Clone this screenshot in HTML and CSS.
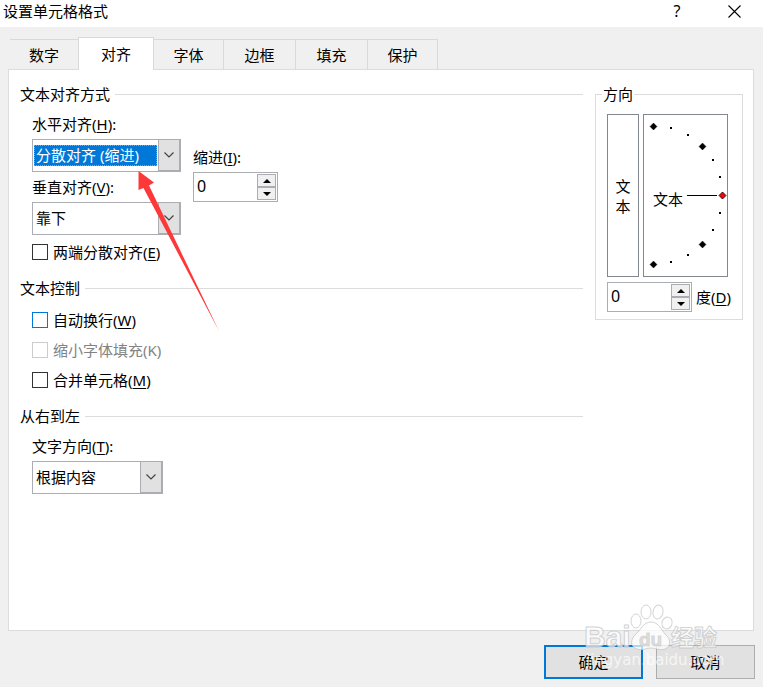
FILE: index.html
```html
<!DOCTYPE html>
<html lang="zh-CN">
<head>
<meta charset="utf-8">
<title>设置单元格格式</title>
<link rel="stylesheet" href="styles.css">
</head>
<body>
<main class="dialog">
  <header class="titlebar">
    <h1 class="title">设置单元格格式</h1>
    <button class="title-btn help" type="button">?</button>
    <button class="title-btn" type="button" aria-label="关闭">
      <svg width="13" height="13" viewBox="0 0 13 13"><path d="M.5.5l12 12M12.500.5l-12 12" fill="none" stroke="#000" stroke-width="1.1"/></svg>
    </button>
  </header>

  <nav class="tabs" role="tablist">
    <button class="tab tab-first" role="tab" type="button">数字</button>
    <button class="tab active" role="tab" type="button" aria-selected="true">对齐</button>
    <button class="tab tab-narrow" role="tab" type="button">字体</button>
    <button class="tab" role="tab" type="button">边框</button>
    <button class="tab" role="tab" type="button">填充</button>
    <button class="tab tab-narrow" role="tab" type="button">保护</button>
  </nav>

  <section class="panel">
    <div class="settings">
      <h2 class="heading">文本对齐方式</h2>
      <div class="align-grid">
        <div class="fields">
          <label class="label" for="horizontal">水平对齐(<u>H</u>):</label>
          <div class="combo">
            <select class="selected" id="horizontal"><option>分散对齐 (缩进)</option></select>
            <span class="drop"><svg width="10" height="6" viewBox="0 0 10 6"><path d="M.5.5L5 5 9.500.5"/></svg></span>
          </div>
          <label class="label label-next" for="vertical">垂直对齐(<u>V</u>):</label>
          <div class="combo">
            <select id="vertical"><option>靠下</option></select>
            <span class="drop"><svg width="10" height="6" viewBox="0 0 10 6"><path d="M.5.5L5 5 9.500.5"/></svg></span>
          </div>
        </div>
        <div class="indent">
          <label class="label" for="indent">缩进(<u>I</u>):</label>
          <div class="spinner">
            <input id="indent" type="text" value="0">
            <div class="steps">
              <button type="button" aria-label="增加缩进"><svg width="8" height="4" viewBox="0 0 8 4"><path d="M0 4L4 0l4 4z"/></svg></button>
              <button type="button" aria-label="减少缩进"><svg width="8" height="4" viewBox="0 0 8 4"><path d="M0 0l4 4 4-4z"/></svg></button>
            </div>
          </div>
        </div>
      </div>
      <label class="check check-justify"><input type="checkbox"><span>两端分散对齐(<u>E</u>)</span></label>

      <h2 class="heading heading-next">文本控制</h2>
      <div class="checks">
        <label class="check"><input class="hot" type="checkbox"><span>自动换行(<u>W</u>)</span></label>
        <label class="check disabled"><input type="checkbox" disabled><span>缩小字体填充(K)</span></label>
        <label class="check"><input type="checkbox"><span>合并单元格(<u>M</u>)</span></label>
      </div>

      <h2 class="heading heading-next">从右到左</h2>
      <div class="fields direction">
        <label class="label" for="direction">文字方向(<u>T</u>):</label>
        <div class="combo">
          <select id="direction"><option>根据内容</option></select>
          <span class="drop"><svg width="10" height="6" viewBox="0 0 10 6"><path d="M.5.5L5 5 9.500.5"/></svg></span>
        </div>
      </div>
    </div>

    <fieldset class="orientation">
      <legend>方向</legend>
      <div class="dials">
        <button class="upright" type="button">文<br>本</button>
        <div class="dial">
          <svg width="83" height="161" viewBox="0 0 83 161">
            <path d="M43 80.500h30" stroke="#000"/>
            <path d="M9.500 8l3.500 3.500-3.500 3.500L6 11.500zM58.500 28l3.500 3.500-3.500 3.500-3.500-3.500zM58.500 126l3.500 3.500-3.500 3.500-3.500-3.500zM9.500 146l3.500 3.500-3.500 3.500-3.500-3.500z" stroke="#000" stroke-width=".4"/>
            <path d="M26 12h2v2h-2zM43 19h2v2h-2zM68 44h2v2h-2zM75 61h2v2h-2zM75 97h2v2h-2zM68 114h2v2h-2zM43 139h2v2h-2zM26 146h2v2h-2z"/>
            <path d="M78.500 77l3.500 3.500-3.500 3.500-3.500-3.500z" fill="#f00" stroke="#000" stroke-width=".8"/>
            <text x="9" y="90">文本</text>
          </svg>
        </div>
      </div>
      <div class="degrees">
        <div class="spinner">
          <input id="degrees" type="text" value="0">
          <div class="steps">
            <button type="button" aria-label="增加度数"><svg width="8" height="4" viewBox="0 0 8 4"><path d="M0 4L4 0l4 4z"/></svg></button>
            <button type="button" aria-label="减少度数"><svg width="8" height="4" viewBox="0 0 8 4"><path d="M0 0l4 4 4-4z"/></svg></button>
          </div>
        </div>
        <label for="degrees">度(<u>D</u>)</label>
      </div>
    </fieldset>
  </section>

  <footer class="actions">
    <button class="action primary" type="button">确定</button>
    <button class="action" type="button">取消</button>
  </footer>

  <svg class="pointer" width="84" height="162" viewBox="0 0 84 162" aria-hidden="true"><path d="M.5 0L16 11.500l-5 3L81 160 5.500 17 .5 19z" fill="#fd3838"/></svg>

  <svg class="watermark" width="150" height="70" viewBox="0 0 150 70" aria-hidden="true">
    <g class="mark">
      <text class="brand" x="2" y="46">Bai</text>
      <ellipse cx="54" cy="20" rx="5" ry="7"/>
      <ellipse cx="64" cy="11" rx="5" ry="7"/>
      <ellipse cx="76" cy="11" rx="5" ry="7" transform="rotate(12 76 11)"/>
      <ellipse cx="85" cy="22" rx="5" ry="6" transform="rotate(20 85 22)"/>
      <path d="M69 21c8 0 10 8 15 13 5 4 5 12-1 14-5 2-9-1-14-1s-9 3-14 1c-7-2-7-10-1-15 5-4 7-12 15-12z"/>
      <text class="du" x="57" y="45">du</text>
      <text class="brand-cn" x="89" y="45">经验</text>
    </g>
    <text class="site" x="4" y="64">jingyan.baidu.com</text>
  </svg>
</main>
</body>
</html>
```

FILE: styles.css
```css
* { box-sizing: border-box; }

body {
  margin: 0;
  background: #f0f0f0;
  color: #000;
  font: 15px/20px "Noto Sans", "Noto Sans CJK SC", sans-serif;
}

button, input, select { font: inherit; color: inherit; margin: 0; }
button { padding: 0; }
svg { display: block; }
u { text-underline-offset: 2px; text-decoration-thickness: 1px; }

.dialog {
  position: relative;
  display: flex;
  flex-direction: column;
  min-height: 100vh;
}

.titlebar {
  display: flex;
  align-items: center;
  height: 27px;
  padding: 0 22px 5px 3px;
  background: #fff;
}
.title { flex: 1; margin: 0; font-size: 15px; font-weight: 400; }
.title-btn {
  display: flex;
  justify-content: center;
  width: 14px;
  border: 0;
  background: none;
}
.help { margin-right: 43px; font-size: 16px; }

.tabs {
  display: flex;
  align-items: flex-end;
  margin: 10px 10px 0;
}
.tab {
  width: 72px;
  height: 30px;
  border: solid #d9d9d9;
  border-width: 1px 1px 0 0;
  background: #f0f0f0;
}
.tab-first { width: 68px; border-right: 0; }
.tab-narrow { width: 70px; }
.tab.active {
  z-index: 1;
  width: 76px;
  height: 33px;
  margin-bottom: -1px;
  border-left-width: 1px;
  background: #fff;
}

.panel {
  display: flex;
  flex: 1;
  align-items: flex-start;
  gap: 12px;
  margin: 0 9px 0 8px;
  padding: 14px 10px 14px 11px;
  border: 1px solid #dcdcdc;
  background: #fff;
}
.settings { flex: 1; }

.heading {
  display: flex;
  align-items: center;
  gap: 5px;
  margin: 0;
  font-size: 15px;
  font-weight: 400;
}
.heading::after { content: ""; flex: 1; height: 1px; background: #dcdcdc; }
.heading-next { margin-top: 16px; }

.align-grid { display: flex; gap: 12px; margin: 10px 0 0 12px; }
.fields { width: 149px; }
.direction { width: 131px; margin: 10px 0 0 12px; }
.label { display: block; margin-bottom: 5px; }
.label-next { margin-top: 5px; }
.indent { padding-top: 33px; }

.combo {
  display: flex;
  height: 33px;
  border: 1px solid #abadb3;
  background: #fff;
}
.combo select {
  appearance: none;
  flex: 1;
  min-width: 0;
  height: 21px;
  margin: 5px 1px;
  padding: 0 2px 1px;
  border: 0;
  outline: 0;
  border-radius: 0;
  background: #fff;
  line-height: 20px;
}
.combo .selected {
  border: 1px dotted #ff8728;
  padding: 0 1px 1px;
  background: #0078d7;
  color: #fff;
  line-height: 18px;
}
.drop {
  display: flex;
  align-items: center;
  justify-content: center;
  width: 22px;
  border: 1px solid #abadb3;
  border-top: 0;
  background: #e1e1e1;
  pointer-events: none;
}
.drop path { fill: none; stroke: #444; stroke-width: 1.2; }

.spinner {
  display: flex;
  width: 85px;
  height: 30px;
  border: 1px solid #abadb3;
  background: #fff;
}
.spinner input {
  flex: 1;
  min-width: 0;
  padding: 0 3px 3px;
  border: 0;
  outline: 0;
  background: none;
  font-size: 16px;
}
.steps { display: flex; flex-direction: column; width: 20px; padding: 1px 1px 1px 0; }
.steps button {
  display: flex;
  flex: 1;
  align-items: center;
  justify-content: center;
  border: 1px solid #abadb3;
  background: #f0f0f0;
}

.check { display: flex; align-items: center; gap: 5px; width: fit-content; }
.check input {
  appearance: none;
  width: 16px;
  height: 16px;
  border: 1px solid #333;
  background: #fff;
}
.check .hot { border-color: #0078d7; }
.check-justify { margin: 7px 0 0 12px; }
.checks {
  display: flex;
  flex-direction: column;
  gap: 10px;
  margin: 12px 0 0 12px;
}
.disabled { color: #838383; }
.check.disabled input { border-color: #ccc; }

.orientation {
  width: 148px;
  margin: 0;
  padding: 10px 8px 7px 11px;
  border: 1px solid #dcdcdc;
}
.orientation legend { margin-left: -5px; padding: 0 1px; }
.dials { display: flex; gap: 4px; height: 163px; }
.upright, .dial { border: 1px solid #828790; background: #fff; }
.upright { width: 32px; line-height: 20px; }
.dial { width: 85px; }
.degrees { display: flex; align-items: center; gap: 4px; margin-top: 5px; white-space: nowrap; }

.actions { display: flex; justify-content: flex-end; gap: 13px; padding: 14px 8px 8px; }
.action {
  width: 99px;
  height: 34px;
  border: 1px solid #adadad;
  background: #e1e1e1;
}
.primary { border: 2px solid #0078d7; }

.pointer { position: absolute; left: 138px; top: 171px; pointer-events: none; }

.watermark {
  position: absolute;
  right: 31px;
  bottom: 16px;
  pointer-events: none;
}
.mark {
  fill: #fff;
  fill-opacity: .7;
  stroke: #c0c0c0;
  stroke-opacity: .7;
  stroke-width: 1px;
}
.brand { font: 700 30px "Liberation Sans", sans-serif; }
.du { fill: #d0d0d0; stroke: #d0d0d0; font: 700 19px "Liberation Sans", sans-serif; }
.brand-cn { font: 700 23px "Noto Sans CJK SC", sans-serif; }
.site { fill: #fff; fill-opacity: .7; font: 15px "DejaVu Sans", sans-serif; }
```
